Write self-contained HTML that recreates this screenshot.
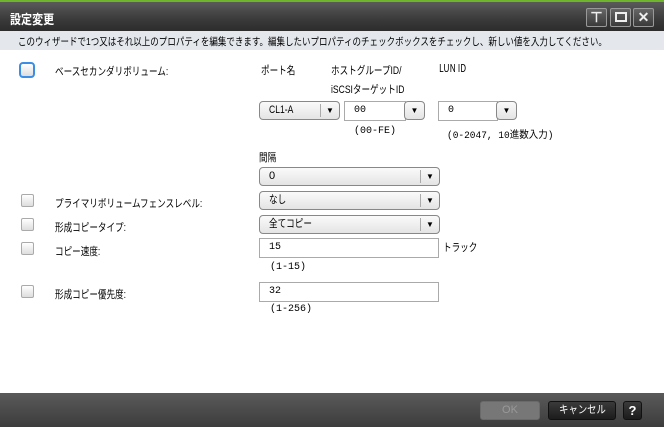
<!DOCTYPE html>
<html><head><meta charset="utf-8"><style>
*{box-sizing:border-box;margin:0;padding:0}
body{width:664px;height:427px;overflow:hidden;background:#fff;font-family:"Liberation Sans","Noto Sans CJK JP",sans-serif;font-size:11px;color:#000;position:relative}
.a{position:absolute;white-space:nowrap}
.n{transform:scaleX(.78);transform-origin:0 0}
.title{left:0;top:0;width:664px;height:31px;background:linear-gradient(#5a5a5a,#3a3a3a 60%,#2c2c2c);border-top:2px solid #6fb52c}
.title span{position:absolute;left:10px;top:7px;color:#fff;font-weight:bold;font-size:13px}
.tb{top:8px;width:21px;height:19px;border:1px solid #999;border-radius:2px;background:linear-gradient(#666,#3a3a3a);color:#eee;text-align:center;font-size:14px;line-height:17px;font-weight:bold}
.info{left:0;top:31px;width:664px;height:19px;background:#e4e7ec}
.sel{height:19px;border:1px solid #888;border-radius:4px;background:linear-gradient(#fafafa,#e4e4e4);padding-left:9px;line-height:17px}
.sel i{position:absolute;right:0;top:2px;width:19px;height:13px;border-left:1px solid #aaa;font-style:normal;font-size:8px;text-align:center;line-height:13px}
.cb{width:13px;height:13px;border:1px solid #aaa;border-radius:2px;background:linear-gradient(#fff,#ddd)}
.inp{height:20px;border:1px solid #aaa;background:#fff;padding-left:9px;line-height:18px;font-family:"Liberation Mono",monospace;font-size:10px}
.mono{font-family:"Liberation Mono","Noto Sans CJK JP",monospace;font-size:10px}
.foot{left:0;top:393px;width:664px;height:34px;background:linear-gradient(#5a5a5a,#3c3c3c)}
.btn{top:401px;height:19px;border:1px solid #111;border-radius:3px;text-align:center;line-height:17px;color:#fff;background:linear-gradient(#3a3a3a,#1c1c1c)}
</style></head><body>
<div class="a title"><span class="n" style="transform:scaleX(.85)">設定変更</span></div>
<div class="a tb" style="left:586px">⊤</div>
<div class="a tb" style="left:610px"><div style="width:12px;height:10px;border:2px solid #eee;margin:3px auto"></div></div>
<div class="a tb" style="left:633px">✕</div>
<div class="a info"></div>
<div class="a n" style="left:18px;top:34px;font-size:10.5px;transform:scaleX(.81)">このウィザードで1つ又はそれ以上のプロパティを編集できます。編集したいプロパティのチェックボックスをチェックし、新しい値を入力してください。</div>

<div class="a cb" style="left:19px;top:62px;width:16px;height:16px;border:2px solid #3a8ee6;border-radius:4px"></div>
<div class="a n" style="left:55px;top:63px">ベースセカンダリボリューム:</div>
<div class="a n" style="left:261px;top:62px">ポート名</div>
<div class="a n" style="left:331px;top:62px">ホストグループID/</div>
<div class="a n" style="left:439px;top:60px;font-family:'Noto Sans CJK JP',sans-serif">LUN ID</div>
<div class="a n" style="left:331px;top:81px">iSCSIターゲットID</div>
<div class="a sel" style="left:259px;top:101px;width:81px"><span class="a n" style="left:9px;top:0">CL1-A</span><i>▼</i></div>
<div class="a inp" style="left:344px;top:101px;width:62px">00</div>
<div class="a sel" style="left:404px;top:101px;width:21px;padding:0"><i style="border:0">▼</i></div>
<div class="a inp" style="left:438px;top:101px;width:60px">0</div>
<div class="a sel" style="left:496px;top:101px;width:21px;padding:0"><i style="border:0">▼</i></div>
<div class="a mono" style="left:354px;top:126px">(00-FE)</div>
<div class="a mono n" style="left:447px;top:126px;transform:scaleX(.95)">(0-2047, 10進数入力)</div>
<div class="a n" style="left:259px;top:149px">間隔</div>
<div class="a sel" style="left:259px;top:167px;width:181px">0<i>▼</i></div>

<div class="a cb" style="left:21px;top:194px"></div>
<div class="a n" style="left:55px;top:195px">プライマリボリュームフェンスレベル:</div>
<div class="a sel" style="left:259px;top:191px;width:181px"><span class="a n" style="left:9px;top:0">なし</span><i>▼</i></div>
<div class="a cb" style="left:21px;top:218px"></div>
<div class="a n" style="left:55px;top:219px">形成コピータイプ:</div>
<div class="a sel" style="left:259px;top:215px;width:181px"><span class="a n" style="left:9px;top:0">全てコピー</span><i>▼</i></div>
<div class="a cb" style="left:21px;top:242px"></div>
<div class="a n" style="left:55px;top:243px">コピー速度:</div>
<div class="a inp" style="left:259px;top:238px;width:180px">15</div>
<div class="a n" style="left:443px;top:239px">トラック</div>
<div class="a mono" style="left:270px;top:262px">(1-15)</div>
<div class="a cb" style="left:21px;top:285px"></div>
<div class="a n" style="left:55px;top:286px">形成コピー優先度:</div>
<div class="a inp" style="left:259px;top:282px;width:180px">32</div>
<div class="a mono" style="left:270px;top:304px">(1-256)</div>

<div class="a foot"></div>
<div class="a btn" style="left:480px;width:60px;background:#777;border-color:#6a6a6a;color:#999">OK</div>
<div class="a btn" style="left:548px;width:68px"><span class="n" style="display:inline-block;transform:scaleX(.85);transform-origin:50% 0">キャンセル</span></div>
<div class="a btn" style="left:623px;width:19px;font-weight:bold;font-size:13px">?</div>
</body></html>
